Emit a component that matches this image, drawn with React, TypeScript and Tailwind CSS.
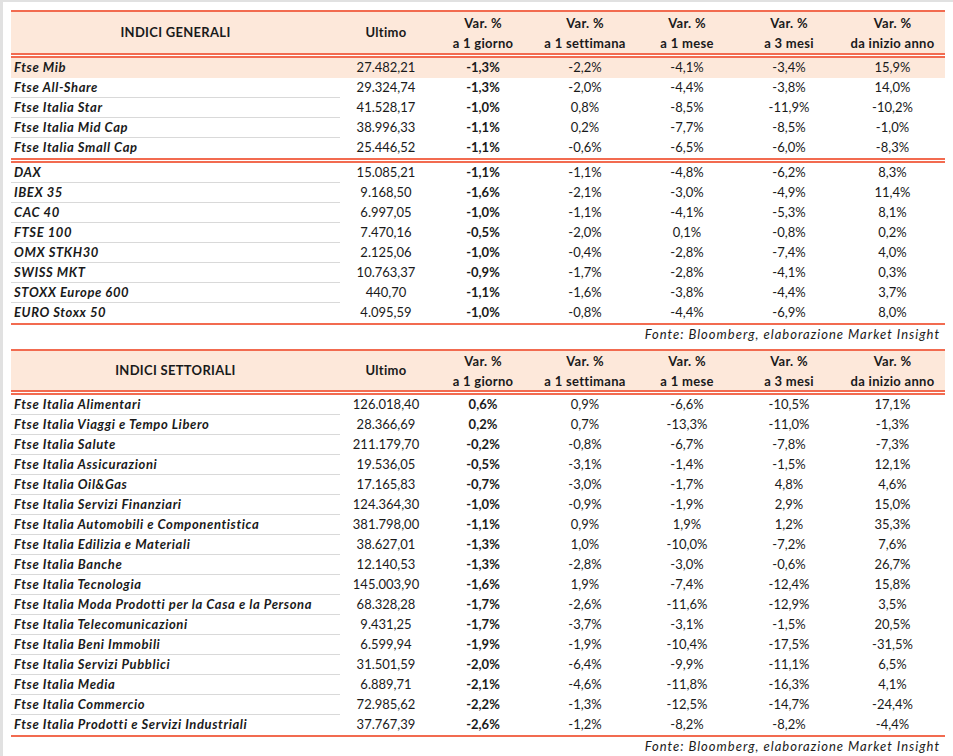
import React from "react";

type Row = {
  name: string;
  last: string;
  d1: string;
  w1: string;
  m1: string;
  m3: string;
  ytd: string;
  hl?: boolean;
};

const generali1: Row[] = [
  { name: "Ftse Mib", last: "27.482,21", d1: "-1,3%", w1: "-2,2%", m1: "-4,1%", m3: "-3,4%", ytd: "15,9%", hl: true },
  { name: "Ftse All-Share", last: "29.324,74", d1: "-1,3%", w1: "-2,0%", m1: "-4,4%", m3: "-3,8%", ytd: "14,0%" },
  { name: "Ftse Italia Star", last: "41.528,17", d1: "-1,0%", w1: "0,8%", m1: "-8,5%", m3: "-11,9%", ytd: "-10,2%" },
  { name: "Ftse Italia Mid Cap", last: "38.996,33", d1: "-1,1%", w1: "0,2%", m1: "-7,7%", m3: "-8,5%", ytd: "-1,0%" },
  { name: "Ftse Italia Small Cap", last: "25.446,52", d1: "-1,1%", w1: "-0,6%", m1: "-6,5%", m3: "-6,0%", ytd: "-8,3%" },
];

const generali2: Row[] = [
  { name: "DAX", last: "15.085,21", d1: "-1,1%", w1: "-1,1%", m1: "-4,8%", m3: "-6,2%", ytd: "8,3%" },
  { name: "IBEX 35", last: "9.168,50", d1: "-1,6%", w1: "-2,1%", m1: "-3,0%", m3: "-4,9%", ytd: "11,4%" },
  { name: "CAC 40", last: "6.997,05", d1: "-1,0%", w1: "-1,1%", m1: "-4,1%", m3: "-5,3%", ytd: "8,1%" },
  { name: "FTSE 100", last: "7.470,16", d1: "-0,5%", w1: "-2,0%", m1: "0,1%", m3: "-0,8%", ytd: "0,2%" },
  { name: "OMX STKH30", last: "2.125,06", d1: "-1,0%", w1: "-0,4%", m1: "-2,8%", m3: "-7,4%", ytd: "4,0%" },
  { name: "SWISS MKT", last: "10.763,37", d1: "-0,9%", w1: "-1,7%", m1: "-2,8%", m3: "-4,1%", ytd: "0,3%" },
  { name: "STOXX Europe 600", last: "440,70", d1: "-1,1%", w1: "-1,6%", m1: "-3,8%", m3: "-4,4%", ytd: "3,7%" },
  { name: "EURO Stoxx 50", last: "4.095,59", d1: "-1,0%", w1: "-0,8%", m1: "-4,4%", m3: "-6,9%", ytd: "8,0%" },
];

const settoriali: Row[] = [
  { name: "Ftse Italia Alimentari", last: "126.018,40", d1: "0,6%", w1: "0,9%", m1: "-6,6%", m3: "-10,5%", ytd: "17,1%" },
  { name: "Ftse Italia Viaggi e Tempo Libero", last: "28.366,69", d1: "0,2%", w1: "0,7%", m1: "-13,3%", m3: "-11,0%", ytd: "-1,3%" },
  { name: "Ftse Italia Salute", last: "211.179,70", d1: "-0,2%", w1: "-0,8%", m1: "-6,7%", m3: "-7,8%", ytd: "-7,3%" },
  { name: "Ftse Italia Assicurazioni", last: "19.536,05", d1: "-0,5%", w1: "-3,1%", m1: "-1,4%", m3: "-1,5%", ytd: "12,1%" },
  { name: "Ftse Italia Oil&Gas", last: "17.165,83", d1: "-0,7%", w1: "-3,0%", m1: "-1,7%", m3: "4,8%", ytd: "4,6%" },
  { name: "Ftse Italia Servizi Finanziari", last: "124.364,30", d1: "-1,0%", w1: "-0,9%", m1: "-1,9%", m3: "2,9%", ytd: "15,0%" },
  { name: "Ftse Italia Automobili e Componentistica", last: "381.798,00", d1: "-1,1%", w1: "0,9%", m1: "1,9%", m3: "1,2%", ytd: "35,3%" },
  { name: "Ftse Italia Edilizia e Materiali", last: "38.627,01", d1: "-1,3%", w1: "1,0%", m1: "-10,0%", m3: "-7,2%", ytd: "7,6%" },
  { name: "Ftse Italia Banche", last: "12.140,53", d1: "-1,3%", w1: "-2,8%", m1: "-3,0%", m3: "-0,6%", ytd: "26,7%" },
  { name: "Ftse Italia Tecnologia", last: "145.003,90", d1: "-1,6%", w1: "1,9%", m1: "-7,4%", m3: "-12,4%", ytd: "15,8%" },
  { name: "Ftse Italia Moda Prodotti per la Casa e la Persona", last: "68.328,28", d1: "-1,7%", w1: "-2,6%", m1: "-11,6%", m3: "-12,9%", ytd: "3,5%" },
  { name: "Ftse Italia Telecomunicazioni", last: "9.431,25", d1: "-1,7%", w1: "-3,7%", m1: "-3,1%", m3: "-1,5%", ytd: "20,5%" },
  { name: "Ftse Italia Beni Immobili", last: "6.599,94", d1: "-1,9%", w1: "-1,9%", m1: "-10,4%", m3: "-17,5%", ytd: "-31,5%" },
  { name: "Ftse Italia Servizi Pubblici", last: "31.501,59", d1: "-2,0%", w1: "-6,4%", m1: "-9,9%", m3: "-11,1%", ytd: "6,5%" },
  { name: "Ftse Italia Media", last: "6.889,71", d1: "-2,1%", w1: "-4,6%", m1: "-11,8%", m3: "-16,3%", ytd: "4,1%" },
  { name: "Ftse Italia Commercio", last: "72.985,62", d1: "-2,2%", w1: "-1,3%", m1: "-12,5%", m3: "-14,7%", ytd: "-24,4%" },
  { name: "Ftse Italia Prodotti e Servizi Industriali", last: "37.767,39", d1: "-2,6%", w1: "-1,2%", m1: "-8,2%", m3: "-8,2%", ytd: "-4,4%" },
];

const cols = "grid grid-cols-[329px_92px_102px_102px_102px_102px_105px]";

const DoubleLine = () => (
  <div className="flex flex-col">
    <div className="h-[2px] bg-[#f26b50]" />
    <div className="h-[1px] bg-white" />
    <div className="h-[2px] bg-[#f26b50]" />
  </div>
);

const Header = ({ title, h }: { title: string; h: string }) => (
  <>
    <div className="h-[2px] bg-[#f26b50]" />
    <div className={`${cols} ${h} bg-[#fde8da] font-bold text-[13px] items-center text-center tracking-[0.3px]`}>
      <div>{title}</div>
      <div>Ultimo</div>
      {["a 1 giorno", "a 1 settimana", "a 1 mese", "a 3 mesi", "da inizio anno"].map((s) => (
        <div key={s} className="flex flex-col leading-[20px]">
          <span>Var. %</span>
          <span>{s}</span>
        </div>
      ))}
    </div>
    <DoubleLine />
  </>
);

const Rows = ({ rows }: { rows: Row[] }) => (
  <>
    {rows.map((r, i) => (
      <div
        key={r.name}
        className={`${cols} h-[20px] text-[13px] leading-[19px] text-center ${r.hl ? "bg-[#fde8da]" : ""}`}
      >
        <div
          className={`text-left pl-[3px] font-bold italic tracking-[0.6px] whitespace-nowrap ${
            i < rows.length - 1 && !r.hl ? "border-b border-[#d9d9d9]" : ""
          }`}
        >
          {r.name}
        </div>
        <div>{r.last}</div>
        <div className="font-bold">{r.d1}</div>
        <div>{r.w1}</div>
        <div>{r.m1}</div>
        <div>{r.m3}</div>
        <div>{r.ytd}</div>
      </div>
    ))}
  </>
);

const Fonte = () => (
  <div className="text-right italic text-[13px] leading-[18px] pr-[5px] tracking-[1px]">
    Fonte: Bloomberg, elaborazione Market Insight
  </div>
);

export default function App() {
  return (
    <div className="w-[953px] h-[756px] bg-white border-t-2 border-l-[3px] border-[#e1e1e1] pt-[8px] pl-[8px] text-[#1a1a1a] font-['Lato',sans-serif] overflow-hidden">
      <div className="w-[934px]">
        <Header title="INDICI GENERALI" h="h-[41px]" />
        <Rows rows={generali1} />
        <DoubleLine />
        <Rows rows={generali2} />
        <div className="h-[2px] bg-[#f26b50]" />
        <Fonte />
        <div className="h-[6px]" />
        <Header title="INDICI SETTORIALI" h="h-[39px]" />
        <Rows rows={settoriali} />
        <div className="h-[2px] bg-[#f26b50]" />
        <Fonte />
      </div>
    </div>
  );
}
